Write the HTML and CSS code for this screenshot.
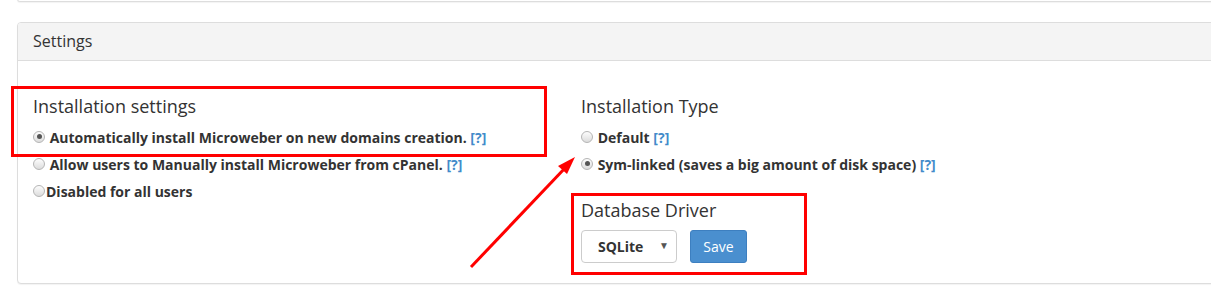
FILE: index.html
```html
<!DOCTYPE html>
<html lang="en">
<head>
  <meta charset="UTF-8" />
  <title>Settings</title>
  <link rel="stylesheet" href="styles.css">
</head>
<body>
  <div class="page">
    <div class="panel panel-prev"></div>
    <div class="panel">
      <div class="panel-heading">Settings</div>
      <div class="panel-body">
        <div class="col col-left">
          <h4>Installation settings</h4>
          <label class="opt"><input type="radio" name="install" checked> Automatically install Microweber on new domains creation. <a href="#">[?]</a></label>
          <label class="opt"><input type="radio" name="install"> Allow users to Manually install Microweber from cPanel. <a href="#">[?]</a></label>
          <label class="opt"><input type="radio" name="install">Disabled for all users</label>
        </div>
        <div class="col col-right">
          <h4>Installation Type</h4>
          <label class="opt"><input type="radio" name="type"> Default <a href="#">[?]</a></label>
          <label class="opt"><input type="radio" name="type" checked> Sym-linked (saves a big amount of disk space) <a href="#">[?]</a></label>
          <h4 class="db-title">Database Driver</h4>
          <div class="db-row">
            <div class="select">SQLite <span class="caret">▼</span></div>
            <button class="btn">Save</button>
          </div>
        </div>
      </div>
    </div>
    <div class="mark mark-one"></div>
    <div class="mark mark-two"></div>
    <svg class="arrow" width="1211" height="300" viewBox="0 0 1211 300">
      <line x1="471" y1="268" x2="566" y2="168" stroke="#f00" stroke-width="3" />
      <polygon points="575,158 558,167 567,175" fill="#f00" />
    </svg>
  </div>
</body>
</html>
```

FILE: styles.css
```css
html, body {
  margin: 0;
  padding: 0;
  overflow: hidden;
}
body {
  font-family: 'Open Sans', 'Noto Sans', sans-serif;
  color: #333;
  background: #fff;
}
.page {
  position: relative;
  width: 1211px;
  height: 300px;
  padding-left: 17px;
  box-sizing: border-box;
}
.panel {
  width: 1230px;
  border: 1px solid #ddd;
  border-radius: 4px;
  box-shadow: 0 1px 1px rgba(0, 0, 0, 0.05);
  background: #fff;
}
.panel-prev {
  height: 2px;
  border-top: none;
  border-radius: 0 0 4px 4px;
  margin-top: -1px;
  margin-bottom: 20px;
}
.panel-heading {
  background: #f4f4f4;
  border-bottom: 1px solid #ddd;
  padding: 0 15px;
  height: 37px;
  line-height: 36px;
  font-size: 16px;
  border-radius: 3px 3px 0 0;
}
.panel-body {
  display: flex;
  height: 222px;
  padding: 0 15px;
}
.col-left {
  width: 548px;
}
h4 {
  margin: 33px 0 6px;
  font-size: 18px;
  font-weight: 400;
  line-height: 24px;
}
.opt {
  display: flex;
  align-items: center;
  height: 27px;
  font-size: 14px;
  font-weight: 700;
  white-space: pre;
}
.opt a {
  color: #428bca;
  text-decoration: none;
}
.opt input {
  appearance: none;
  -webkit-appearance: none;
  width: 12px;
  height: 12px;
  margin: -2px 1px 0 0;
  border: 1px solid #b5b5b5;
  border-radius: 50%;
  background: linear-gradient(#fdfdfd, #dcdcdc);
  box-sizing: border-box;
  position: relative;
}
.opt input:checked::after {
  content: '';
  position: absolute;
  left: 2.5px;
  top: 2.5px;
  width: 5px;
  height: 5px;
  border-radius: 50%;
  background: #555;
}
.db-title {
  margin: 20px 0 8px;
}
.db-row {
  display: flex;
  gap: 13px;
}
.select {
  width: 96px;
  height: 33px;
  box-sizing: border-box;
  border: 1px solid #ccc;
  border-radius: 4px;
  font-size: 14px;
  font-weight: 700;
  line-height: 31px;
  padding-left: 16px;
  position: relative;
}
.caret {
  position: absolute;
  right: 7px;
  top: -1px;
  font-size: 10px;
  color: #555;
}
.btn {
  height: 33px;
  width: 57px;
  border: 1px solid #3d7fc0;
  border-radius: 3px;
  background: #4a8fcf;
  color: #fff;
  font-family: inherit;
  font-size: 14px;
  padding: 0;
}
.mark {
  position: absolute;
  border: 3px solid #f00;
  box-sizing: border-box;
}
.mark-one {
  left: 11px;
  top: 87px;
  width: 536px;
  height: 71px;
}
.mark-two {
  left: 571px;
  top: 194px;
  width: 236px;
  height: 82px;
}
.arrow {
  position: absolute;
  left: 0;
  top: 0;
  pointer-events: none;
}
```
